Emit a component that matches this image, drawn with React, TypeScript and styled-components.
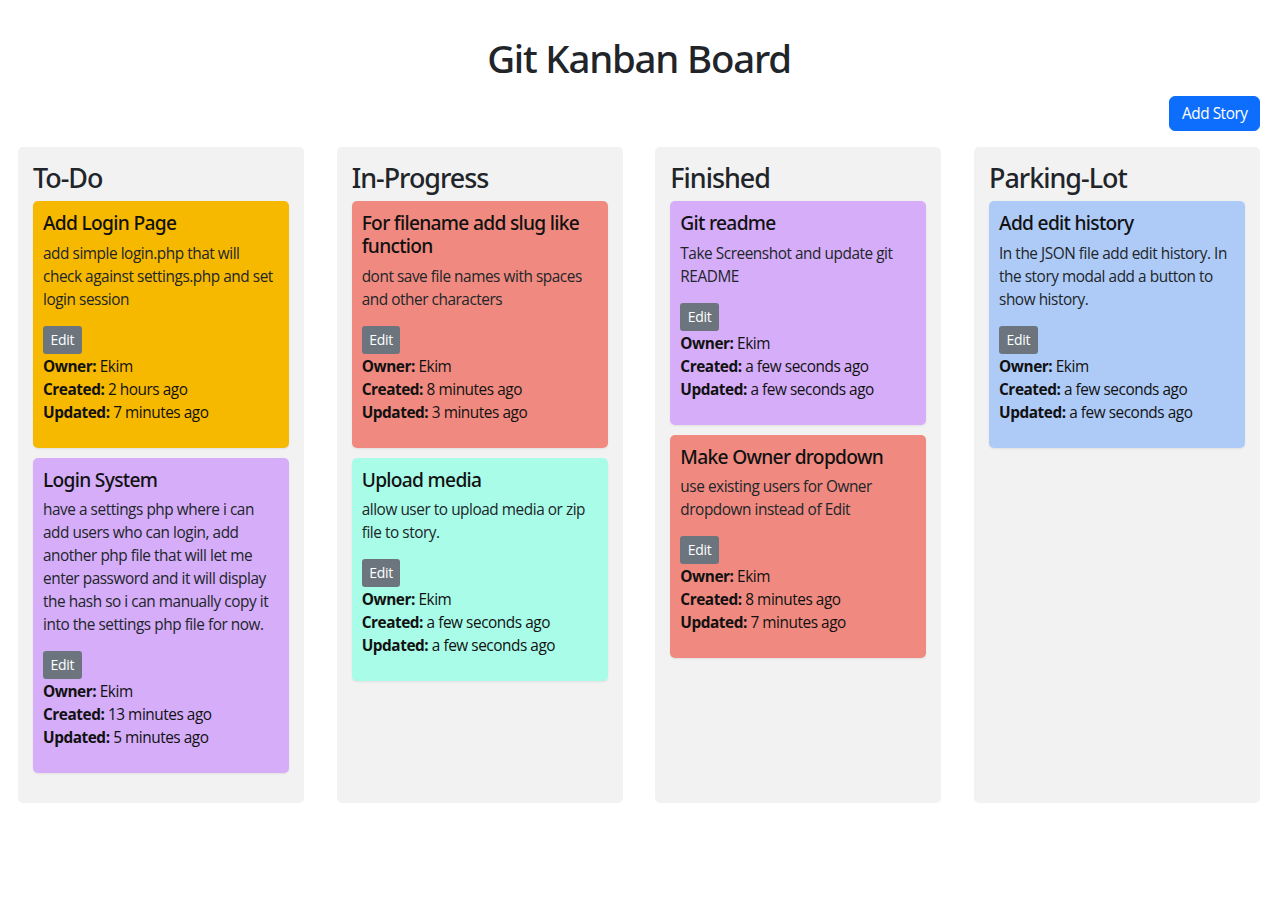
import styled, { createGlobalStyle } from "styled-components";

interface Story {
  id: number;
  title: string;
  text: string;
  owner: string;
  created: string;
  updated: string;
  color: string;
}

interface Lane {
  name: string;
  stories: Story[];
}

const YELLOW = "#f7b900";
const PURPLE = "#d5adf9";
const SALMON = "#f08a80";
const AQUA = "#a8fce8";
const BLUE = "#aecbf8";

const lanes: Lane[] = [
  {
    name: "To-Do",
    stories: [
      {
        id: 1,
        title: "Add Login Page",
        text: "add simple login.php that will check against settings.php and set login session",
        owner: "Ekim",
        created: "2 hours ago",
        updated: "7 minutes ago",
        color: YELLOW,
      },
      {
        id: 2,
        title: "Login System",
        text: "have a settings php where i can add users who can login, add another php file that will let me enter password and it will display the hash so i can manually copy it into the settings php file for now.",
        owner: "Ekim",
        created: "13 minutes ago",
        updated: "5 minutes ago",
        color: PURPLE,
      },
    ],
  },
  {
    name: "In-Progress",
    stories: [
      {
        id: 3,
        title: "For filename add slug like function",
        text: "dont save file names with spaces and other characters",
        owner: "Ekim",
        created: "8 minutes ago",
        updated: "3 minutes ago",
        color: SALMON,
      },
      {
        id: 4,
        title: "Upload media",
        text: "allow user to upload media or zip file to story.",
        owner: "Ekim",
        created: "a few seconds ago",
        updated: "a few seconds ago",
        color: AQUA,
      },
    ],
  },
  {
    name: "Finished",
    stories: [
      {
        id: 5,
        title: "Git readme",
        text: "Take Screenshot and update git README",
        owner: "Ekim",
        created: "a few seconds ago",
        updated: "a few seconds ago",
        color: PURPLE,
      },
      {
        id: 6,
        title: "Make Owner dropdown",
        text: "use existing users for Owner dropdown instead of Edit",
        owner: "Ekim",
        created: "8 minutes ago",
        updated: "7 minutes ago",
        color: SALMON,
      },
    ],
  },
  {
    name: "Parking-Lot",
    stories: [
      {
        id: 7,
        title: "Add edit history",
        text: "In the JSON file add edit history. In the story modal add a button to show history.",
        owner: "Ekim",
        created: "a few seconds ago",
        updated: "a few seconds ago",
        color: BLUE,
      },
    ],
  },
];

function StoryCard({ story }: { story: Story }) {
  return (
    <Card color={story.color}>
      <CardTitle>{story.title}</CardTitle>
      <CardText>{story.text}</CardText>
      <EditButton type="button">Edit</EditButton>
      <Meta>
        <div>
          <b>Owner:</b> {story.owner}
        </div>
        <div>
          <b>Created:</b> {story.created}
        </div>
        <div>
          <b>Updated:</b> {story.updated}
        </div>
      </Meta>
    </Card>
  );
}

export default function App() {
  return (
    <>
      <GlobalStyle />
      <Page>
        <Title>Git Kanban Board</Title>
        <Toolbar>
          <PrimaryButton type="button">Add Story</PrimaryButton>
        </Toolbar>
        <Board>
          {lanes.map((lane) => (
            <Column key={lane.name}>
              <ColumnTitle>{lane.name}</ColumnTitle>
              <CardList>
                {lane.stories.map((s) => (
                  <StoryCard key={s.id} story={s} />
                ))}
              </CardList>
            </Column>
          ))}
        </Board>
      </Page>
    </>
  );
}

const GlobalStyle = createGlobalStyle`
  * { box-sizing: border-box; }
  body {
    margin: 0;
    background: #fff;
    color: #212529;
    font-family: "Segoe UI", "Open Sans", "Noto Sans", sans-serif;
    font-size: 15.36px;
    line-height: 23px;
    letter-spacing: -0.45px;
  }
`;

const headingFont = `"Segoe UI", "Noto Sans", "Open Sans", sans-serif`;

const Page = styled.div`
  padding: 35px 20px 60px 18px;
`;

const Title = styled.h1`
  margin: 0;
  text-align: center;
  font-family: ${headingFont};
  font-size: 38.4px;
  line-height: 46px;
  font-weight: 500;
  letter-spacing: -1.2px;
  color: #212529;
`;

const Toolbar = styled.div`
  display: flex;
  justify-content: flex-end;
  margin-top: 15px;
  margin-bottom: 16px;
`;

const PrimaryButton = styled.button`
  height: 35px;
  padding: 0 11.5px;
  border: 1px solid #0d6efd;
  border-radius: 6px;
  background: #0d6efd;
  color: #fff;
  font-family: inherit;
  font-size: 15.36px;
  line-height: 23px;
  letter-spacing: -0.45px;
`;

const Board = styled.div`
  display: grid;
  grid-template-columns: repeat(4, 1fr);
  column-gap: 32.7px;
  align-items: stretch;
`;

const Column = styled.div`
  background: #f2f2f2;
  border-radius: 5px;
  padding: 15px 15px 30px;
  min-height: 656px;
`;

const ColumnTitle = styled.h3`
  margin: 0 0 7px;
  font-family: ${headingFont};
  font-size: 26.9px;
  line-height: 32px;
  font-weight: 500;
  letter-spacing: -1px;
  color: #212529;
`;

const CardList = styled.div`
  display: flex;
  flex-direction: column;
  gap: 10px;
`;

const Card = styled.div<{ color: string }>`
  background: ${(p) => p.color};
  border-radius: 5px;
  padding: 10px 10px 24px;
  box-shadow: 0 1px 2px rgba(0, 0, 0, 0.08);
`;

const CardTitle = styled.h5`
  margin: 0 0 7.7px;
  font-family: ${headingFont};
  font-size: 19.2px;
  line-height: 23px;
  font-weight: 500;
  letter-spacing: -0.7px;
  color: #111;
`;

const CardText = styled.p`
  margin: 0 0 15px;
  color: #212529;
`;

const EditButton = styled.button`
  display: block;
  height: 28px;
  padding: 0 7.5px;
  border: none;
  border-radius: 3px;
  background: #6c757d;
  color: #fff;
  font-family: inherit;
  font-size: 14px;
  line-height: 20px;
  letter-spacing: -0.3px;
`;

const Meta = styled.div`
  margin-top: 1px;
  color: #111;

  b {
    font-weight: 700;
  }
`;
